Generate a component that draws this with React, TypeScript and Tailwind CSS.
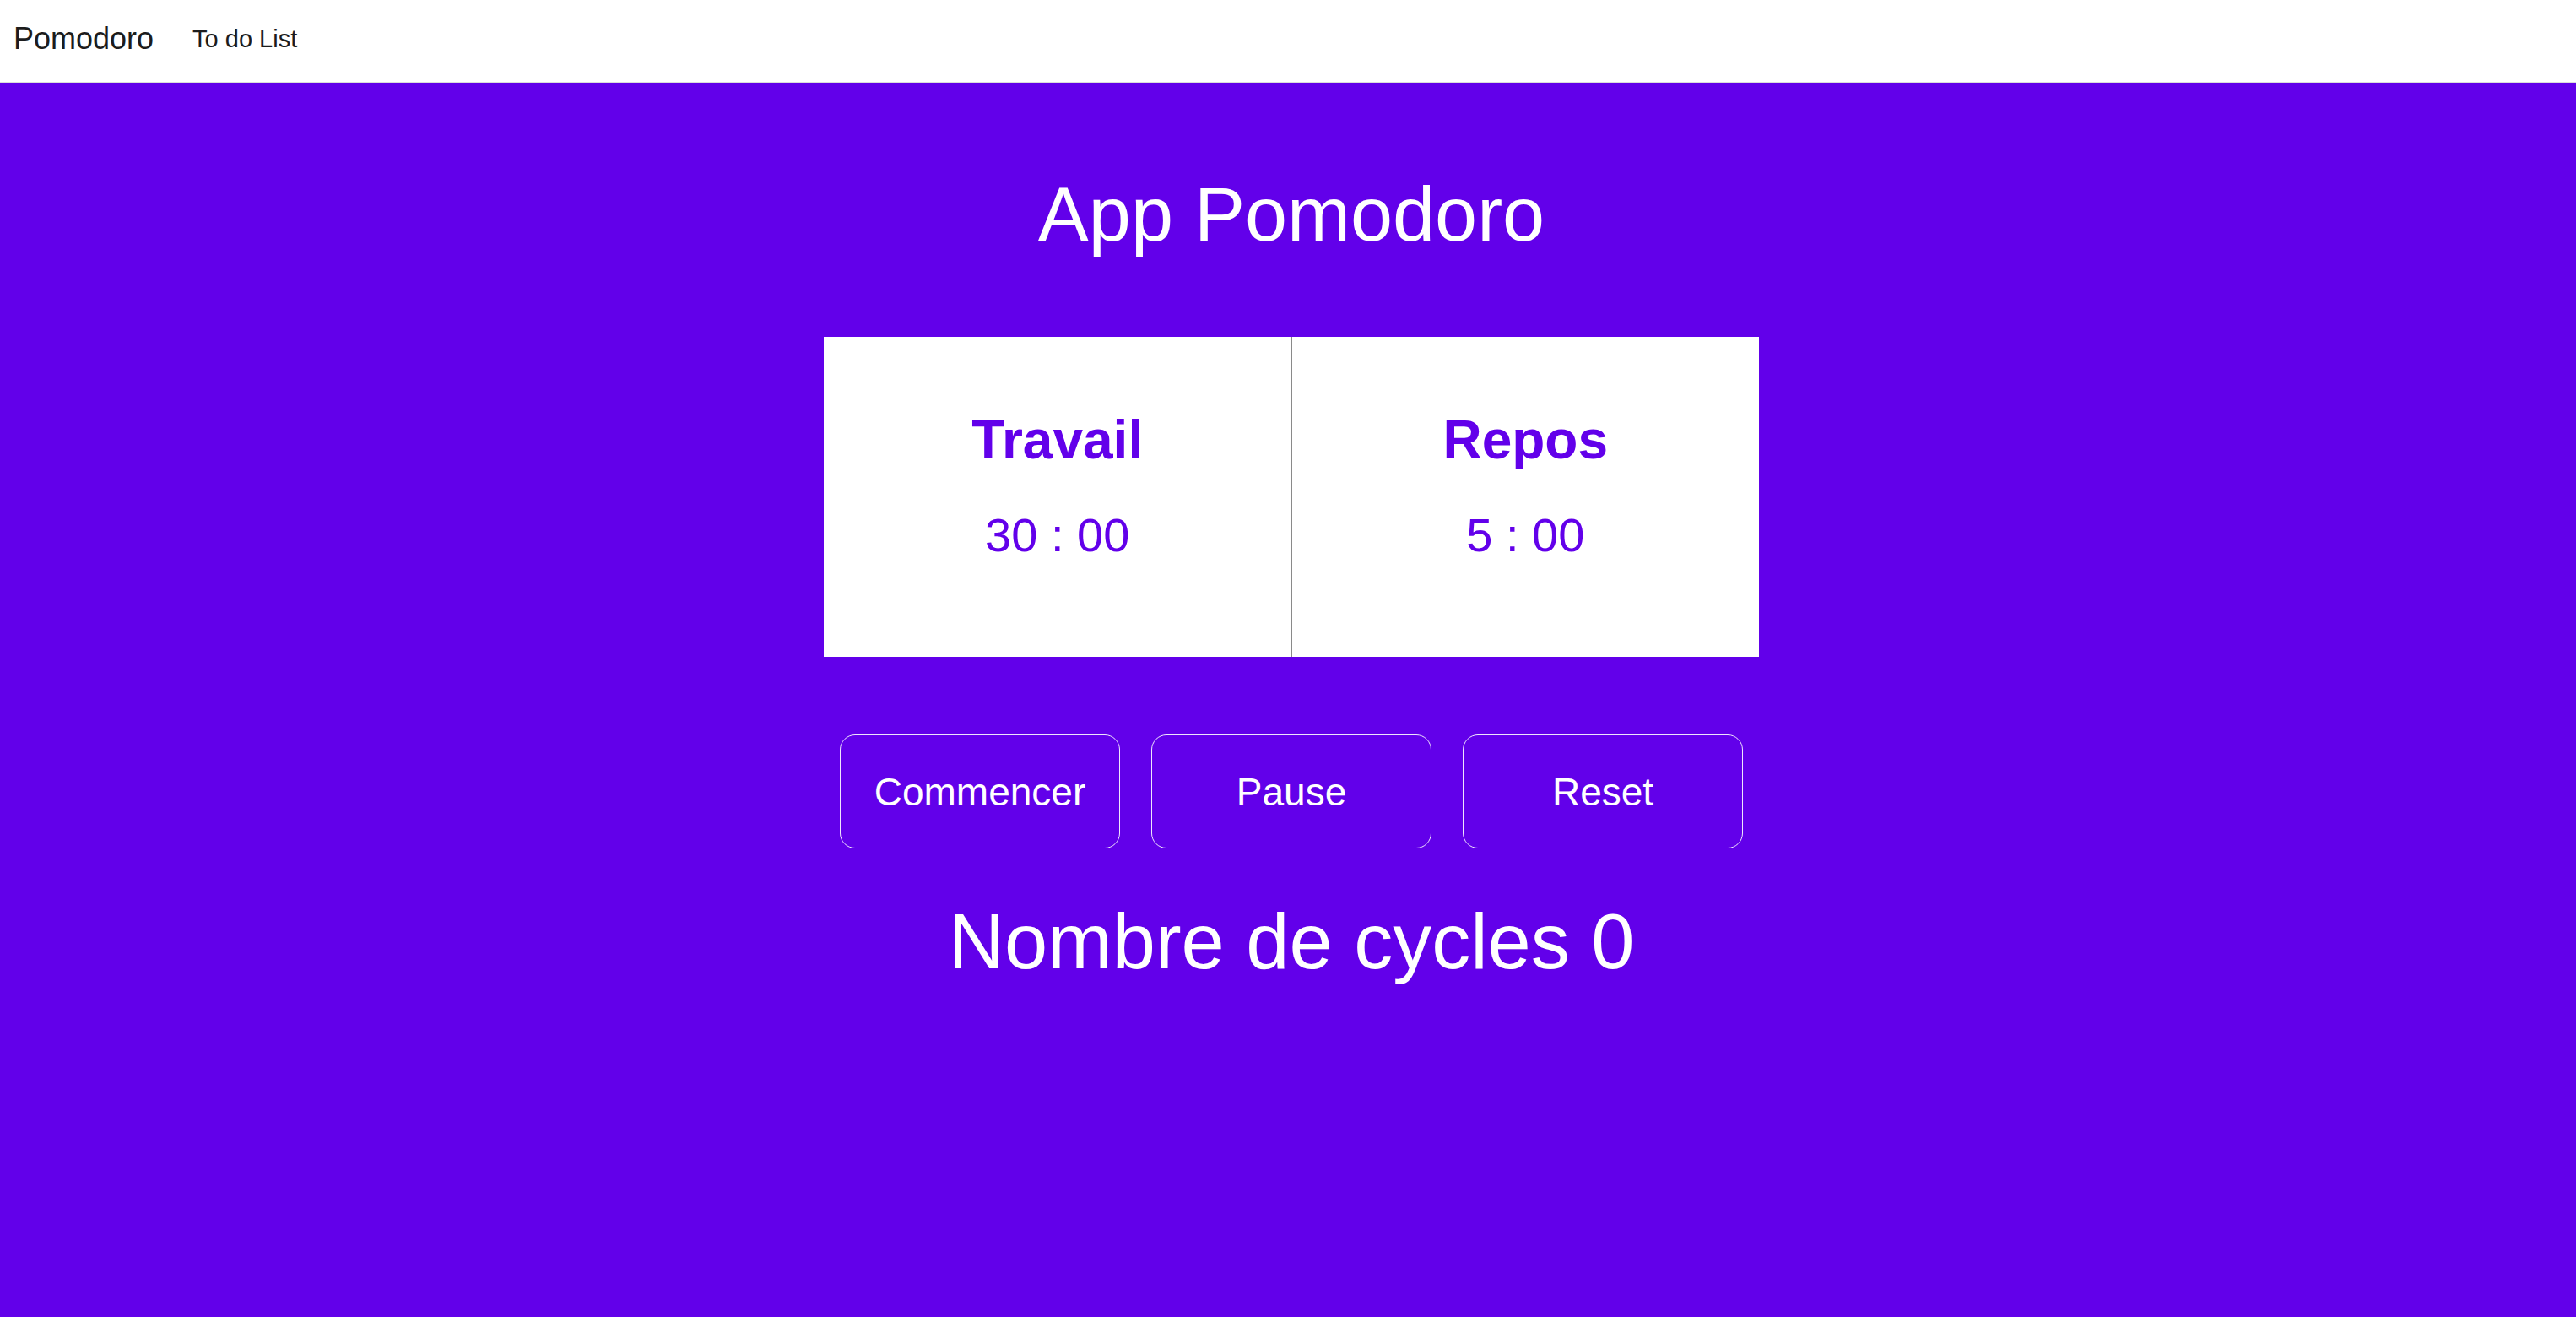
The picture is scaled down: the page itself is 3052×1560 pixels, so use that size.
import React from 'react';

const font = { fontFamily: '"Liberation Sans", Arial, sans-serif' };

function TimerPanel({ label, time, divider }: { label: string; time: string; divider?: boolean }) {
  return (
    <div className={`flex-1 flex flex-col items-center pt-[90px] ${divider ? 'border-r border-[#8a8a8a]' : ''}`}>
      <h2 className="text-[64px] leading-none font-bold text-[#6200ea]">{label}</h2>
      <p className="mt-[53px] text-[56px] leading-none text-[#6200ea]">{time}</p>
    </div>
  );
}

export default function App() {
  const buttons = ['Commencer', 'Pause', 'Reset'];

  return (
    <div style={font} className="h-screen overflow-hidden bg-white flex flex-col">
      <nav className="h-[98px] shrink-0 border-b border-[#dcdcdc] flex items-center pb-[5px] pl-[16px]">
        <a className="text-[36px] leading-none text-[#1c1c1c]">Pomodoro</a>
        <a className="ml-[46px] text-[29px] leading-none text-[#1c1c1c]">To do List</a>
      </nav>

      <main className="bg-[#6200ea] flex-1 flex flex-col items-center pt-[111px] pl-[8px]">
        <h1 className="text-[90px] leading-none text-white">App Pomodoro</h1>

        <div className="mt-[100px] w-[1108px] h-[379px] bg-white flex">
          <TimerPanel label="Travail" time="30 : 00" divider />
          <TimerPanel label="Repos" time="5 : 00" />
        </div>

        <div className="mt-[92px] flex gap-[37px]">
          {buttons.map((b) => (
            <button
              key={b}
              className="w-[332px] h-[135px] rounded-[18px] border border-white/90 flex items-center justify-center text-[46px] leading-none text-white"
            >
              {b}
            </button>
          ))}
        </div>

        <p className="mt-[64px] text-[92px] leading-none text-white">Nombre de cycles 0</p>
      </main>
    </div>
  );
}
